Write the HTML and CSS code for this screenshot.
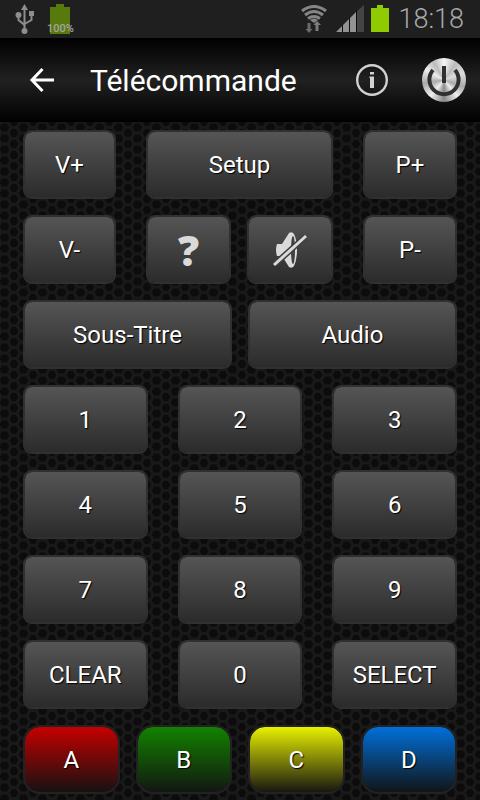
FILE: index.html
```html
<!DOCTYPE html>
<html lang="fr">
<head>
<meta charset="utf-8">
<meta name="viewport" content="width=device-width, initial-scale=1">
<title>Télécommande</title>
<link rel="stylesheet" href="styles.css">
</head>
<body>
<div class="status">
  <svg class="usb" width="20" height="30" viewBox="0 0 20 30" fill="none" stroke="#8e8e8e" stroke-width="2">
    <path d="M9.500 4v22M3.500 12v4l6 5M16.500 10v6l-7 4"/>
    <g fill="#8e8e8e" stroke="none"><path d="M9.500 0l3.500 6H6z"/><circle cx="3.500" cy="11" r="3"/><path d="M14 7h5v5h-5z"/><circle cx="9.500" cy="27" r="3"/></g>
  </svg>
  <div class="charge">
    <svg width="20" height="30" viewBox="0 0 20 30"><path d="M6 0h8v3h6v27H0V3h6z" fill="#577a0c"/></svg>
    <span class="percent">100%</span>
  </div>
  <div class="spacer"></div>
  <svg width="28" height="28" viewBox="0 0 28 28">
    <g fill="none" stroke="#858585" stroke-width="3"><path d="M2 6q12-9 24 0M5 10q9-7 18 0M8 13.500q6-4 12 0"/></g>
    <path d="M14 18l-4-3q4-3 8 0z" fill="#858585"/>
    <path d="M7.500 18h3v6h2L9 28l-3.500-4h2z" fill="#6a6a6a"/><path d="M15.500 26h3v-6h2.500L17 16l-3.500 4h2z" fill="#7c7c7c"/>
  </svg>
  <svg class="signal" width="28" height="28" viewBox="0 0 28 28">
    <path d="M0 27L6 21v6zM7 20l6-6v13H7zM14 13l6-6v20h-6z" fill="#929292"/><path d="M6.500 20v7M13.500 13v14M20.500 6v21" stroke="#0c0c0c" stroke-width="1"/><path d="M21 6l7-6v27h-7z" fill="#444"/>
  </svg>
  <svg class="battery" width="18" height="28" viewBox="0 0 18 28"><path d="M6 0h6v3h6v24H0V3h6z" fill="#8fcb00"/></svg>
  <time class="clock">18:18</time>
</div>
<header class="bar">
  <button class="tool back" aria-label="Retour"><svg width="26" height="26" viewBox="0 0 26 26" fill="none" stroke="#fff" stroke-width="3"><path d="M3 13h22M13.500 2L3 13l10.500 11"/></svg></button>
  <h1 class="title">Télécommande</h1>
  <button class="tool" aria-label="Informations"><svg width="32" height="32" viewBox="0 0 32 32"><circle cx="16" cy="16" r="14.800" fill="none" stroke="#d2d2d2" stroke-width="2.400"/><path d="M14 8h4v2.500h-4zM13.500 12.500H18V24h-4V14h-.5z" fill="#d2d2d2"/></svg></button>
  <button class="tool power" aria-label="Marche / arrêt"><svg width="44" height="44" viewBox="0 0 44 44" fill="none" stroke="#303030"><path d="M11 12A14.600 14.600 0 1 0 33 12" stroke-width="4"/><path d="M22 8v17" stroke-width="4"/></svg></button>
</header>
<main class="remote">
  <div class="row top">
    <button class="key">V+</button><button class="key setup">Setup</button><button class="key">P+</button>
    <button class="key">V-</button>
    <button class="key help">?</button>
    <button class="key" aria-label="Muet"><svg width="34" height="38" viewBox="0 0 34 38"><path d="M4 13h5L16 2q3-2 5 1 3 6 3 16t-3 16q-2 3-5 1L9 25H4q-2-6 0-12z" fill="#dadada"/><ellipse cx="20" cy="19" rx="2" ry="14" fill="#3f3f3f"/><path d="M2 33L32 6" stroke="#3f3f3f" stroke-width="6"/><path d="M1 34L33 5" stroke="#dadada" stroke-width="3"/></svg></button>
    <button class="key">P-</button>
  </div>
  <div class="row two"><button class="key">Sous-Titre</button><button class="key">Audio</button></div>
  <div class="row digits">
    <button class="key">1</button><button class="key">2</button><button class="key">3</button>
    <button class="key">4</button><button class="key">5</button><button class="key">6</button>
    <button class="key">7</button><button class="key">8</button><button class="key">9</button>
    <button class="key">CLEAR</button><button class="key">0</button><button class="key">SELECT</button>
  </div>
  <div class="row colors">
    <button class="key red">A</button><button class="key green">B</button><button class="key yellow">C</button><button class="key blue">D</button>
  </div>
</main>
</body>
</html>
```
FILE: styles.css
```css
* { box-sizing: border-box; }
body {
  margin: 0;
  min-height: 100vh;
  background: #0c0c0c;
  color: #fff;
  font-family: Roboto, "Noto Sans", sans-serif;
  display: flex;
  flex-direction: column;
}
svg { display: block; flex: none; }
.status {
  height: 38px;
  background: #1f1f1f;
  display: flex;
  align-items: center;
  padding: 0 16px 0 15px;
}
.charge { position: relative; margin-left: 15px; }
.percent {
  position: absolute;
  left: -3px;
  bottom: 0;
  font: 500 11px/10px Roboto, sans-serif;
  color: #a5a5a5;
}
.spacer { flex: 1; }
.signal { margin-left: 8px; }
.battery { margin-left: 7px; }
.clock { margin-left: 9px; font-size: 27px; font-weight: 300; color: #a8a8a8; }
.bar {
  height: 84px;
  padding: 0 14px 0 29px;
  display: flex;
  align-items: center;
  background: linear-gradient(#000, #212121 50%, #000);
}
.tool { border: 0; padding: 0; background: none; }
.title { flex: 1; margin: 0; padding-left: 35px; font-size: 30px; font-weight: 400; }
.power {
  margin-left: 34px;
  border-radius: 50%;
  background: conic-gradient(#f6f6f6, #bbb 35deg, #ddd 70deg, #aaa 110deg, #eee 140deg, #888 180deg, #eee 220deg, #aaa 260deg, #eee 300deg, #bbb 330deg, #f6f6f6);
}
.remote {
  flex: 1;
  padding: 8px 23px 6px;
  display: flex;
  flex-direction: column;
  gap: 16px;
  background: url("data:image/svg+xml,%3Csvg xmlns='http://www.w3.org/2000/svg' width='19' height='11'%3E%3Crect width='19' height='11' fill='%230c0c0c'/%3E%3Cpath d='M-1 5.500h4l3-5.500h7l3 5.500h4M3 5.500l3 5.500h7l3-5.500' fill='none' stroke='%23191919' stroke-width='3'/%3E%3C/svg%3E") -5px 0 #0b0b0b;
}
.row { display: grid; gap: 16px; }
.top { grid-template-columns: 93fr 30px 85fr 16px 86fr 30px 94fr; column-gap: 0; }
.top .key:nth-child(1), .top .key:nth-child(4) { grid-column: 1; }
.top .setup { grid-column: 3 / 6; }
.top .key:nth-child(3), .top .key:nth-child(7) { grid-column: 7; }
.top .key:nth-child(5) { grid-column: 3; }
.top .key:nth-child(6) { grid-column: 5; }
.two { grid-template-columns: 1fr 1fr; }
.digits { grid-template-columns: repeat(3, 1fr); column-gap: 30px; }
.colors { grid-template-columns: repeat(4, 1fr); }
.key {
  height: 69px;
  min-width: 0;
  padding: 0;
  display: flex;
  align-items: center;
  justify-content: center;
  border: 2px solid #303030;
  border-radius: 9px;
  background: linear-gradient(#555, #2b2b2b) padding-box;
  color: #fff;
  font: 24px Roboto, sans-serif;
  text-shadow: 1px 1px 1px #000;
}
.help { font: 800 42px "Open Sans", "Noto Sans", sans-serif; color: #dadada; text-shadow: none; }
.colors .key { border-color: #222; border-radius: 17px; }
.red { background: linear-gradient(#c50000, #171111) padding-box; }
.green { background: linear-gradient(#138200, #111711) padding-box; }
.yellow { background: linear-gradient(#e8f000, #171711) padding-box; }
.blue { background: linear-gradient(#0070da, #111417) padding-box; }
```
